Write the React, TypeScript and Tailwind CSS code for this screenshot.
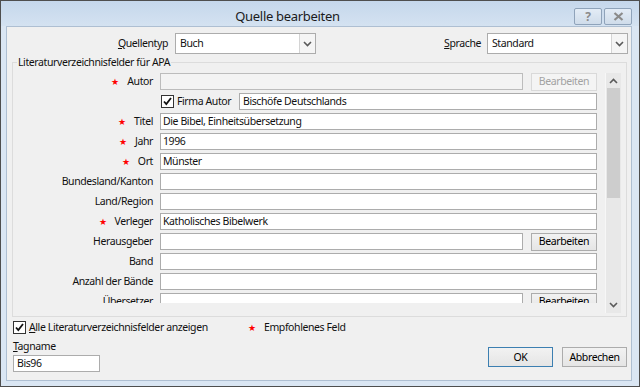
import { ReactNode } from "react";

type Field = {
  label: string;
  star?: boolean;
  value?: string;
  button?: boolean;
  disabled?: boolean;
};

const fields: Field[] = [
  { label: "Autor", star: true, value: "", button: true, disabled: true },
  { label: "__firma__" },
  { label: "Titel", star: true, value: "Die Bibel, Einheitsübersetzung" },
  { label: "Jahr", star: true, value: "1996" },
  { label: "Ort", star: true, value: "Münster" },
  { label: "Bundesland/Kanton" },
  { label: "Land/Region" },
  { label: "Verleger", star: true, value: "Katholisches Bibelwerk" },
  { label: "Herausgeber", button: true },
  { label: "Band" },
  { label: "Anzahl der Bände" },
  { label: "Übersetzer", button: true },
];

function Check() {
  return (
    <span className="flex h-[13px] w-[13px] shrink-0 items-center justify-center border border-[#333333] bg-white">
      <svg width="11" height="11" viewBox="0 0 11 11">
        <path d="M2 5.5 L4.3 8 L9 2" fill="none" stroke="#111" strokeWidth="1.8" />
      </svg>
    </span>
  );
}

function Chevron({ up }: { up?: boolean }) {
  return (
    <svg width="9" height="6" viewBox="0 0 9 6">
      <path
        d={up ? "M1 5 L4.5 1.5 L8 5" : "M1 1 L4.5 4.5 L8 1"}
        fill="none"
        stroke="#5a5a5a"
        strokeWidth="1.6"
      />
    </svg>
  );
}

function Button({ children, disabled, primary, className = "" }: { children: ReactNode; disabled?: boolean; primary?: boolean; className?: string }) {
  return (
    <div
      className={`flex items-center justify-center border ${
        disabled
          ? "border-[#d9d9d9] bg-[#f4f4f4] text-[#a2a2a2]"
          : primary
          ? "border-[#3c7fb1] bg-gradient-to-b from-[#f2f2f2] to-[#e5e5e5] text-black"
          : "border-[#acacac] bg-gradient-to-b from-[#f2f2f2] to-[#e5e5e5] text-black"
      } ${className}`}
    >
      {children}
    </div>
  );
}

function Select({ value }: { value: string }) {
  return (
    <div className="flex h-[21px] w-[141px] items-center border border-[#acacac] bg-white">
      <span className="flex-1 pl-[4px]">{value}</span>
      <span className="flex h-[19px] w-[16px] items-center justify-center border-l border-[#d4d4d4] bg-[#f5f5f5]">
        <Chevron />
      </span>
    </div>
  );
}

function Star() {
  return <span className="mr-[8px] text-[9px] tracking-normal text-[#ff0000]">★</span>;
}

function Row({ f }: { f: Field }) {
  if (f.label === "__firma__") {
    return (
      <div className="mb-[3px] flex h-[17px] items-center">
        <div className="w-[148px]" />
        <Check />
        <span className="ml-[3px] w-[62px]">Firma Autor</span>
        <div className="flex h-[17px] flex-1 items-center border border-[#acacac] bg-white pl-[3px]">
          Bischöfe Deutschlands
        </div>
        <div className="w-[8px]" />
      </div>
    );
  }
  return (
    <div className="mb-[3px] flex h-[17px] items-center">
      <div className="flex w-[140px] items-center justify-end">
        {f.star && <Star />}
        <span>{f.label}</span>
      </div>
      <div className="ml-[7px] flex flex-1 items-center gap-[8px]">
        <div
          className={`flex h-[17px] flex-1 items-center border pl-[2px] ${
            f.disabled ? "border-[#bcbcbc] bg-[#f3f3f3]" : "border-[#acacac] bg-white"
          }`}
        >
          {f.value}
        </div>
        {f.button && (
          <Button disabled={f.disabled} className="h-[18px] w-[66px]">
            Bearbeiten
          </Button>
        )}
      </div>
      <div className="w-[8px]" />
    </div>
  );
}

export default function App() {
  return (
    <div className="flex h-[387px] w-[640px] flex-col border border-[#4e4e4e] bg-[#dae6f3] font-['Noto_Sans',sans-serif] text-[10.5px] leading-[15px] tracking-[-0.4px] text-[#111111]">
      {/* title bar */}
      <div className="flex h-[25px] items-start bg-gradient-to-b from-[#c5d7eb] to-[#d4e2f1]">
        <div className="flex-1 pt-[6px] text-center text-[13px] leading-[18px] tracking-[-0.3px] text-[#1b1b1b]">
          Quelle bearbeiten
        </div>
        <div className="mr-[7px] mt-[7px] flex gap-[2px]">
          <div className="flex h-[17px] w-[28px] items-center justify-center rounded-[2px] border border-[#8fa3ba] bg-gradient-to-b from-[#e3ecf6] to-[#cfdcea] text-[12px] font-bold tracking-normal text-[#8b8b8b]">
            ?
          </div>
          <div className="flex h-[17px] w-[28px] items-center justify-center rounded-[2px] border border-[#8fa3ba] bg-gradient-to-b from-[#e3ecf6] to-[#cfdcea]">
            <svg width="11" height="9" viewBox="0 0 11 9">
              <path d="M1.5 1 L9.5 8 M9.5 1 L1.5 8" stroke="#8b8b8b" strokeWidth="2.2" />
            </svg>
          </div>
        </div>
      </div>

      {/* client area */}
      <div className="mb-[5px] ml-[5px] mr-[7px] flex flex-1 flex-col border border-[#aebfd2] bg-[#f0f0f0]">
        <div className="mt-[6px] flex items-center">
          <div className="w-[161px] text-right">
            <span className="underline">Q</span>uellentyp
          </div>
          <div className="ml-[7px]">
            <Select value="Buch" />
          </div>
          <div className="flex-1 pr-[6px] text-right">
            <span className="underline">S</span>prache
          </div>
          <Select value="Standard" />
          <div className="w-[3px]" />
        </div>

        <fieldset className="ml-[5px] mr-[4px] mt-[1px] border border-[#dcdcdc] pb-[3px]">
          <legend className="ml-[4px] px-[1px]">Literaturverzeichnisfelder für APA</legend>
          <div className="mt-[3px] flex h-[240px]">
            <div className="h-[230px] flex-1 overflow-hidden">
              {fields.map((f, i) => (
                <Row key={i} f={f} />
              ))}
            </div>
            <div className="flex w-[16px] flex-col items-center border-l border-[#f7f7f7] bg-[#e8e8e8]">
              <div className="flex h-[15px] items-center">
                <Chevron up />
              </div>
              <div className="h-[110px] w-[13px] bg-[#cdcdcd]" />
              <div className="flex-1" />
              <div className="flex h-[17px] items-center">
                <Chevron />
              </div>
            </div>
            <div className="w-[5px]" />
          </div>
        </fieldset>

        <div className="ml-[6px] mt-[4px] flex h-[13px] items-center">
          <div className="flex w-[235px] items-center">
            <Check />
            <span className="ml-[3px]">
              <span className="underline">A</span>lle Literaturverzeichnisfelder anzeigen
            </span>
          </div>
          <Star />
          <span>Empfohlenes Feld</span>
        </div>

        <div className="mt-[5px] flex">
          <div className="ml-[6px] flex flex-col">
            <span>
              <span className="underline">T</span>agname
            </span>
            <div className="mt-[1px] flex h-[17px] w-[87px] items-center border border-[#acacac] bg-white pl-[3px]">
              Bis96
            </div>
          </div>
          <div className="flex-1" />
          <div className="mr-[4px] mt-[8px] flex gap-[9px]">
            <Button primary className="h-[20px] w-[65px]">
              OK
            </Button>
            <Button className="h-[20px] w-[65px]">Abbrechen</Button>
          </div>
        </div>
      </div>
    </div>
  );
}
